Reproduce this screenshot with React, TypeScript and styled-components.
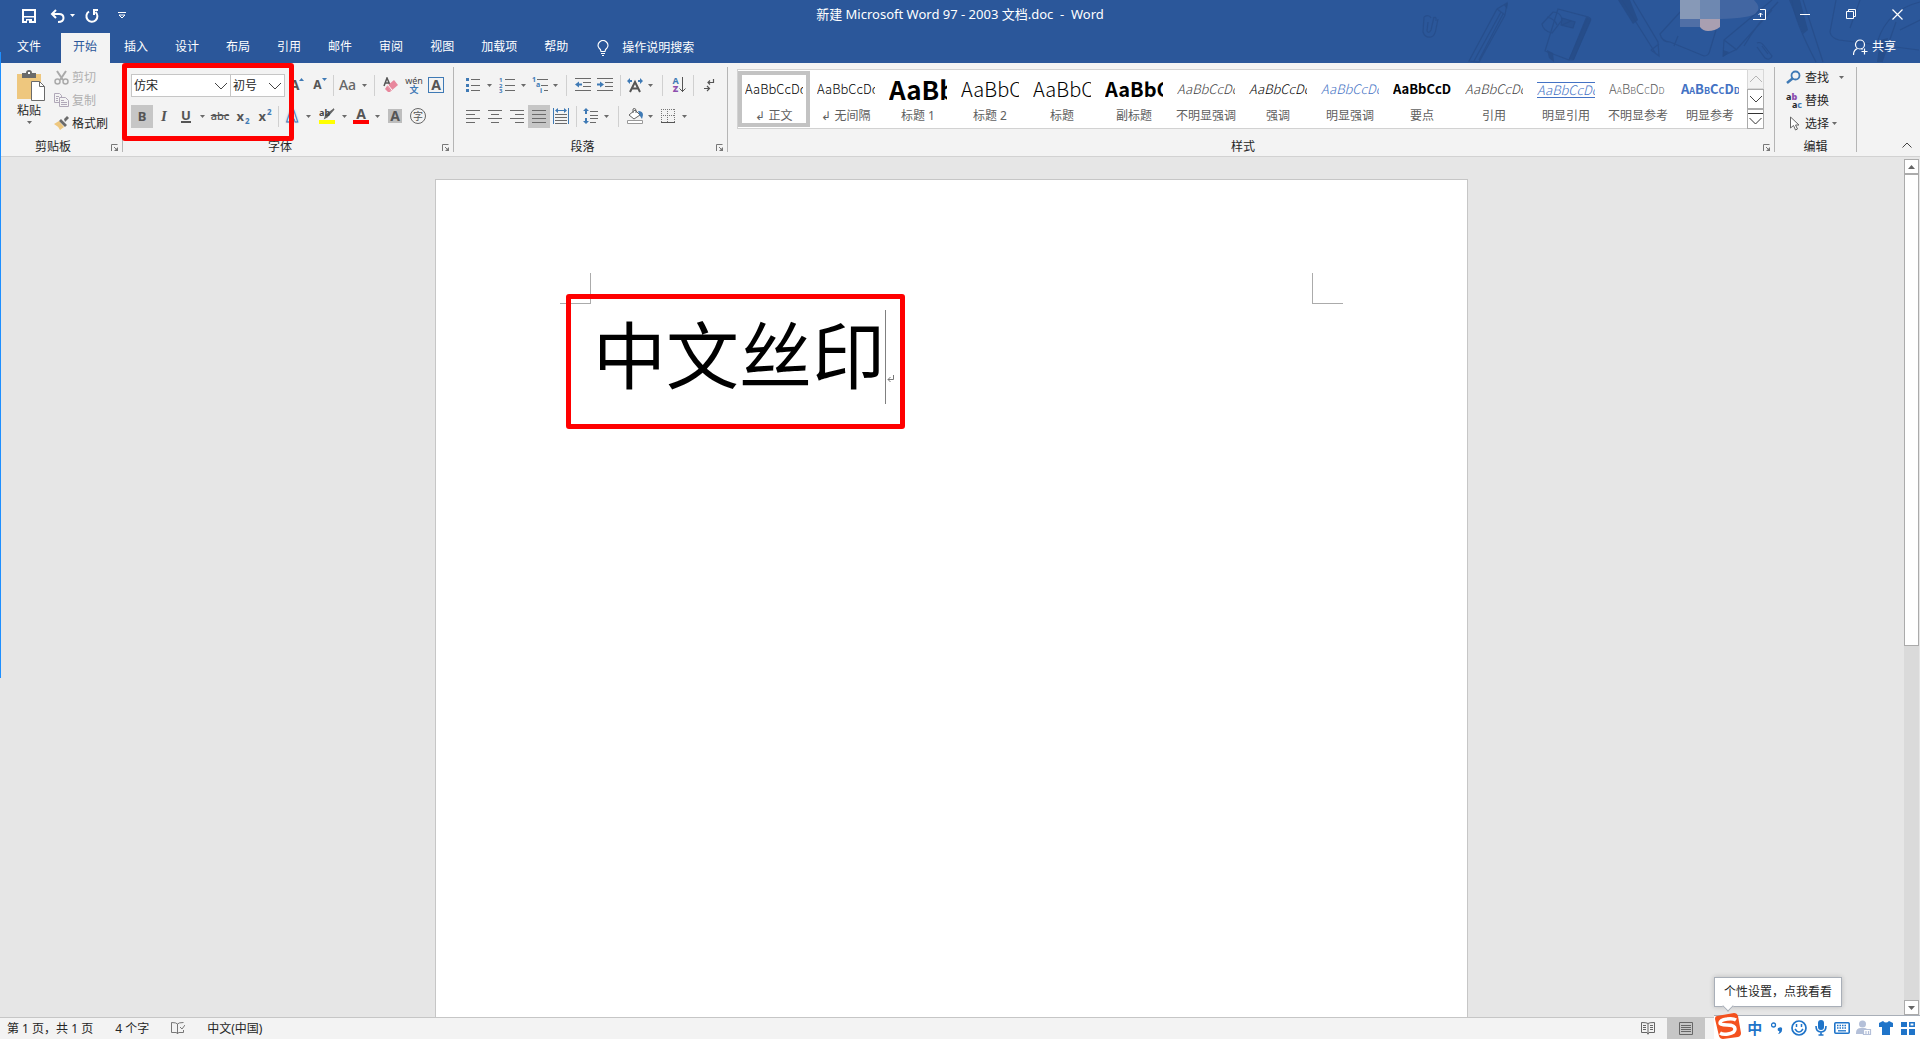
import React from "react";
import styled, { createGlobalStyle, css } from "styled-components";

const C = {
  blue: "#2b579a",
  ribbon: "#f3f3f3",
  body: "#e6e6e6",
  line: "#c6c6c6",
  sep: "#b5b5b5",
  icon: "#6a6a6a",
  accent: "#3f7ab5",
  text: "#262626",
  red: "#ff0000",
  tray: "#1f74c9",
};

const Global = createGlobalStyle`
  * { box-sizing: border-box; }
  body { margin: 0; background: ${C.body}; }
  button, select, a { font: inherit; color: inherit; }
`;

const App$ = styled.div`
  position: relative;
  display: flex;
  flex-direction: column;
  height: 100vh;
  overflow: hidden;
  color: ${C.text};
  font-family: "Noto Sans", "Noto Sans CJK SC", sans-serif;
  font-size: 12px;
  line-height: 16px;
`;

const Plain = styled.button`
  display: inline-flex;
  align-items: center;
  justify-content: center;
  padding: 0;
  border: 0;
  background: transparent;
  white-space: nowrap;
`;

/* ---------- header ---------- */
const Header = styled.header`
  position: relative;
  flex: none;
  background: ${C.blue};
  color: #fff;
`;
const Art = styled.svg`
  position: absolute;
  top: 0;
  right: 0;
  width: 520px;
  height: 63px;
  pointer-events: none;
`;
const TitleBar = styled.div`
  position: relative;
  display: grid;
  grid-template-columns: 1fr auto 1fr;
  height: 33px;
`;
const Quick = styled.div`
  display: flex;
  align-items: center;
  height: 31px;
  padding-left: 14px;
`;
const QuickBtn = styled(Plain)<{ $w: number }>`
  width: ${(p) => p.$w}px;
  height: 24px;
`;
const DocTitle = styled.h1`
  margin: 0;
  font-size: 13px;
  font-weight: 400;
  line-height: 28px;
  white-space: pre;
`;
const WinBtns = styled.div`
  display: flex;
  justify-content: flex-end;
`;
const WinBtn = styled(Plain)`
  width: 46px;
  height: 28px;
`;
const TabRow = styled.nav`
  position: relative;
  display: flex;
  height: 30px;
  padding-left: 3px;
`;
const Tab = styled(Plain)<{ $active?: boolean }>`
  margin: 0 1px;
  padding: 0 13px 2px 12px;
  ${(p) =>
    p.$active &&
    css`
      background: ${C.ribbon};
      color: ${C.blue};
    `}
`;
const FileTab = styled(Tab)`
  padding: 0 18px 2px 13px;
`;
const TellMe = styled(Plain)`
  gap: 13px;
  padding-bottom: 1px;
  margin-left: 15px;
`;
const Share = styled(Plain)`
  gap: 4px;
  margin-left: auto;
  padding: 0 24px 2px 0;
`;

/* ---------- ribbon ---------- */
const Ribbon = styled.div`
  display: flex;
  flex: none;
  height: 94px;
  padding: 4px 0;
  background: ${C.ribbon};
  border-bottom: 1px solid #d2d2d2;
`;
const Group = styled.section<{ $w?: number; $grow?: boolean }>`
  position: relative;
  display: flex;
  flex-direction: column;
  justify-content: space-between;
  ${(p) => (p.$grow ? "flex: 1; min-width: 0;" : `flex: none; width: ${p.$w}px;`)}
  height: 85px;
  border-right: 1px solid ${C.sep};
`;
const GroupFoot = styled.div`
  display: flex;
  align-items: flex-end;
`;
const GroupName = styled.div`
  flex: 1;
  text-align: center;
  line-height: 11px;
`;
const Launch = styled(Plain)`
  width: 16px;
  height: 8px;
  padding-left: 5px;
  justify-content: flex-start;
`;
const Rows = styled.div`
  display: flex;
  flex-direction: column;
  gap: 8px;
  padding: 7px 0 0 8px;
`;
const Row = styled.div`
  display: flex;
  height: 23px;
`;
const Tool = styled(Plain)<{ $w?: number; $on?: boolean }>`
  flex: none;
  width: ${(p) => p.$w ?? 22}px;
  height: 23px;
  padding-bottom: 1px;
  background: ${(p) => (p.$on ? "#c6c6c6" : "transparent")};
  color: #555;
`;
const Sep = styled.i<{ $w?: number }>`
  flex: none;
  width: ${(p) => p.$w ?? 5}px;
  margin: 1px 0;
  background: linear-gradient(#d0d0d0, #d0d0d0) center / 1px 100% no-repeat;
`;
const ComboWrap = styled.label<{ $w: number }>`
  position: relative;
  display: block;
  width: ${(p) => p.$w}px;
  height: 23px;
  & + & {
    margin-left: -1px;
  }
`;
const Combo = styled.select`
  appearance: none;
  width: 100%;
  height: 23px;
  padding: 0 2px;
  border: 1px solid ${C.line};
  border-radius: 0;
  background: #fff;
`;
const ComboArrow = styled.svg`
  position: absolute;
  right: 3px;
  top: 8px;
  pointer-events: none;
`;
const Glyph = styled.span<{ $size?: number; $color?: string }>`
  font-size: ${(p) => p.$size ?? 14}px;
  line-height: 16px;
  font-weight: 700;
  color: ${(p) => p.$color ?? "#555"};
`;
const CaseText = styled.span`
  font-size: 14px;
  font-weight: 500;
  color: #666;
`;
const Italic = styled(Glyph)`
  font-family: "Liberation Serif", serif;
  font-style: italic;
`;
const Under = styled(Glyph)`
  border-bottom: 2px solid #555;
  line-height: 12px;
`;
const Strike = styled(Glyph)`
  text-decoration: line-through;
  font-weight: 500;
`;
const Small = styled.small<{ $up?: boolean }>`
  align-self: ${(p) => (p.$up ? "flex-start" : "flex-end")};
  margin: 3px 0 2px 1px;
  font-size: 8px;
  line-height: 8px;
  font-weight: 700;
  color: ${C.accent};
`;
const GrowMark = styled.svg`
  align-self: flex-start;
  margin-top: 4px;
`;
const Outline = styled(Glyph)`
  color: #fff;
  -webkit-text-stroke: 1px ${C.accent};
  text-shadow: 0 0 3px #8db7e0;
`;
const Bar = styled.span<{ $c: string }>`
  display: flex;
  justify-content: center;
  width: 16px;
  height: 16px;
  border-bottom: 4px solid ${(p) => p.$c};
  & > span {
    line-height: 12px;
  }
`;
const Phonetic = styled.span`
  display: flex;
  flex-direction: column;
  align-items: center;
  font-size: 9px;
  line-height: 8px;
  color: #444;
  b {
    font-size: 9px;
    line-height: 9px;
    color: ${C.accent};
  }
`;
const Boxed = styled(Glyph)`
  width: 16px;
  border: 1px solid ${C.accent};
  line-height: 14px;
`;
const Shaded = styled(Glyph)`
  width: 14px;
  background: #bdbdbd;
  line-height: 14px;
`;
const Circled = styled.span`
  width: 16px;
  height: 16px;
  border: 1px solid #666;
  border-radius: 50%;
  font-size: 10px;
  line-height: 14px;
  text-align: center;
`;
const SortGlyph = styled.span`
  display: flex;
  flex-direction: column;
  font-size: 9px;
  line-height: 8px;
  font-weight: 700;
  color: ${C.accent};
  b {
    color: #8e4fae;
  }
`;
const RedBox = styled.div<{ $l: number; $t: number; $w: number; $h: number }>`
  position: absolute;
  left: ${(p) => p.$l}px;
  top: ${(p) => p.$t}px;
  width: ${(p) => p.$w}px;
  height: ${(p) => p.$h}px;
  border: 5px solid ${C.red};
  border-radius: 3px;
  pointer-events: none;
`;

const ClipRow = styled.div`
  display: flex;
`;
const Paste = styled(Plain)`
  flex-direction: column;
  justify-content: flex-start;
  width: 54px;
  height: 66px;
  padding: 3px 0 0 4px;
  gap: 2px;
  svg:first-child {
    margin-left: 4px;
  }
`;
const Stack = styled.div<{ $pad?: number }>`
  display: flex;
  flex-direction: column;
  padding-left: ${(p) => p.$pad ?? 0}px;
`;
const LineBtn = styled(Plain)<{ $off?: boolean }>`
  justify-content: flex-start;
  gap: 3px;
  height: 23px;
  padding-bottom: 2px;
  color: ${(p) => (p.$off ? "#b0b0b0" : C.text)};
`;
const FarArrow = styled.span`
  display: flex;
  padding-left: 7px;
`;
const Replace = styled.span`
  width: 16px;
  font-size: 9px;
  font-weight: 700;
  line-height: 8px;
  text-align: left;
  b {
    color: #8e4fae;
  }
  em {
    display: block;
    font-style: normal;
    text-align: right;
  }
  i {
    font-style: normal;
    color: ${C.accent};
  }
`;

const Gallery = styled.div`
  display: flex;
  height: 60px;
  margin: 2px 10px 0 9px;
  border: 1px solid #d2d2d2;
  background: #fff;
`;
const Items = styled.div`
  display: flex;
  flex: 1;
  min-width: 0;
  padding: 1px 0;
  overflow: hidden;
`;
const StyleItem = styled.button<{ $on?: boolean }>`
  flex: none;
  display: flex;
  flex-direction: column;
  gap: 5px;
  width: 72px;
  height: 56px;
  padding: 0 3px;
  border: 4px solid ${(p) => (p.$on ? "#c3c3c3" : "transparent")};
  background: transparent;
`;
const Sample = styled.span<{ $size?: number; $bold?: boolean; $it?: boolean; $c?: string; $caps?: boolean; $ruled?: boolean }>`
  width: 58px;
  height: 28px;
  overflow: hidden;
  white-space: nowrap;
  text-align: left;
  font-family: "Noto Sans CJK SC", sans-serif;
  font-size: ${(p) => p.$size ?? 13}px;
  line-height: 28px;
  font-weight: ${(p) => (p.$bold ? 700 : 300)};
  font-style: ${(p) => (p.$it ? "italic" : "normal")};
  font-variant: ${(p) => (p.$caps ? "small-caps" : "normal")};
  color: ${(p) => p.$c ?? "#000"};
  ${(p) =>
    p.$ruled &&
    css`
      height: 16px;
      margin: 7px 0 5px;
      line-height: 14px;
      border-top: 1px solid #4472c4;
      border-bottom: 1px solid #4472c4;
    `}
`;
const StyleName = styled.span`
  align-self: center;
  line-height: 15px;
  color: #606060;
  white-space: nowrap;
`;
const GalleryNav = styled.div`
  display: flex;
  flex-direction: column;
  width: 17px;
  margin: -1px -1px -1px 0;
`;
const NavBtn = styled(Plain)<{ $off?: boolean }>`
  height: 20px;
  border: 1px solid ${(p) => (p.$off ? "#d8d8d8" : "#ababab")};
  background: ${(p) => (p.$off ? C.ribbon : "#fff")};
`;
const CollapseArea = styled.div`
  display: flex;
  width: 63px;
`;
const Collapse = styled(Plain)`
  align-self: flex-end;
  margin-left: auto;
  width: 26px;
  height: 14px;
`;

/* ---------- workspace ---------- */
const Work = styled.div`
  display: flex;
  flex: 1;
  min-height: 0;
`;
const Canvas = styled.main`
  flex: 1;
  display: flex;
  justify-content: center;
  padding: 22px 1px 0 0;
  overflow: hidden;
`;
const Page = styled.article`
  position: relative;
  width: 1033px;
  height: 1460px;
  padding: 123px 154px;
  border: 1px solid ${C.line};
  background: #fff;
`;
const Crop = styled.i<{ $right?: boolean }>`
  position: absolute;
  top: 93px;
  width: 31px;
  height: 31px;
  border-bottom: 1px solid #ababab;
  ${(p) =>
    p.$right
      ? "right: 124px; border-left: 1px solid #ababab;"
      : "left: 124px; border-right: 1px solid #ababab;"}
`;
const Para = styled.p`
  display: flex;
  align-items: center;
  height: 108px;
  margin: 0;
  padding-left: 3px;
  color: #000;
  font-family: "Noto Sans CJK SC", sans-serif;
  font-size: 73px;
`;
const Run = styled.span`
  align-self: flex-start;
  line-height: 96px;
`;
const Caret = styled.i`
  width: 1px;
  height: 94px;
  margin-right: 1px;
  background: #808080;
`;
const ParaMark = styled.svg`
  margin-top: 44px;
`;
const Scroll = styled.div`
  display: flex;
  flex-direction: column;
  width: 16px;
  padding: 2px 1px 2px 0;
`;
const ScrollBtn = styled(Plain)`
  flex: none;
  height: 15px;
  border: 1px solid #ababab;
  background: #fff;
`;
const Thumb = styled.div`
  flex: 57;
  border: 1px solid #ababab;
  background: #fff;
`;
const Track = styled.div`
  flex: 43;
  background: #dadada;
`;

/* ---------- status ---------- */
const Status = styled.footer`
  display: flex;
  flex: none;
  align-items: center;
  height: 22px;
  padding-left: 7px;
  border-top: 1px solid ${C.line};
  background: ${C.ribbon};
`;
const StatItem = styled(Plain)`
  margin-right: 22px;
`;
const Views = styled.div`
  display: flex;
  align-self: stretch;
  margin: 0 215px 0 auto;
`;
const ViewBtn = styled(Plain)<{ $on?: boolean }>`
  width: 38px;
  background: ${(p) => (p.$on ? "#c6c6c6" : "transparent")};
`;
const Tray = styled.div`
  position: absolute;
  right: 0;
  bottom: 0;
  display: flex;
  align-items: center;
  justify-content: space-between;
  width: 206px;
  height: 24px;
  padding-right: 3px;
  border-top: 1px solid #a9afb8;
  background: #fff;
`;
const TrayBtn = styled(Plain)`
  width: 18px;
  height: 22px;
  color: ${C.tray};
  font-size: 15px;
  font-weight: 700;
`;
const LogoBtn = styled(Plain)`
  width: 28px;
  height: 28px;
  margin-top: -4px;
`;
const Tip = styled.div`
  position: absolute;
  right: 78px;
  bottom: 32px;
  width: 128px;
  height: 30px;
  border: 1px solid #a9afb8;
  background: #fff;
  box-shadow: 0 0 5px rgba(0, 0, 0, 0.2);
  line-height: 28px;
  text-align: center;
  &::after {
    content: "";
    position: absolute;
    left: 9px;
    bottom: -4px;
    width: 7px;
    height: 7px;
    border: solid #a9afb8;
    border-width: 0 1px 1px 0;
    background: #fff;
    transform: rotate(45deg);
  }
`;
const EdgeLine = styled.i`
  position: absolute;
  left: 0;
  top: 52px;
  width: 1px;
  height: 626px;
  background: #1e8fff;
`;

/* ---------- drawings ---------- */
const Svg = ({ w = 16, h = 16, children }: { w?: number; h?: number; children: React.ReactNode }) => (
  <svg width={w} height={h} viewBox={`0 0 ${w} ${h}`} fill="none" aria-hidden="true">
    {children}
  </svg>
);
const Down = ({ color = "#6a6a6a" }: { color?: string }) => (
  <Svg w={5} h={3}>
    <path d="M0 0h5L2.500 3z" fill={color} />
  </Svg>
);
const Drop = ({ label }: { label: string }) => (
  <Tool $w={11} aria-label={label}>
    <Down />
  </Tool>
);
const Chevron = ({ up, color = "#444" }: { up?: boolean; color?: string }) => (
  <Svg w={14} h={8}>
    <path d={up ? "M1 7l6-6 6 6" : "M1 1l6 6 6-6"} stroke={color} />
  </Svg>
);
const LaunchIcon = () => (
  <Svg w={8} h={8}>
    <path d="M.5 7V.5H6.500M3 3l3 3" stroke="#777" />
    <path d="M7 3v4H3z" fill="#777" />
  </Svg>
);
const Lines = ({ rows }: { rows: [number, number, number][] }) => (
  <path d={rows.map(([y, a, b]) => `M${a} ${y + 0.5}H${b}`).join("")} stroke={C.icon} />
);
const Foot = ({ name, launch = true }: { name: string; launch?: boolean }) => (
  <GroupFoot>
    <GroupName>{name}</GroupName>
    {launch && (
      <Launch aria-label={`${name}设置`}>
        <LaunchIcon />
      </Launch>
    )}
  </GroupFoot>
);

const HeaderArt = () => (
  <Art viewBox="0 0 520 63" fill="none" aria-hidden="true">
    <g stroke="#264c88" strokeWidth="1.2" opacity=".75">
      <path d="M24 17l-1 15q2 6 8 5 4-1 5-8l2-10M28 22l-1 9q2 3 4-1l3-13M24 17q5-3 7 1M33 18q4-2 3 3" />
      <path d="M69 61L97 9l10-6-2 12-26 47zM74 61l27-49M79 60l24-46M97 9l8 6M69 61l10 1" />
      <path d="M142 24l11-12q8 0 9 8l-10 13q-9-2-10-9zM147 17q8 2 10 8" />
      <path d="M158 9l30 8-19 43-24-9zM188 17q4 1 2 5l-17 38h-4M162 18l13 4-2 6-12-3zM162 25l9-4" />
      <path d="M222 0l34 54M233 0l25 42 1 14-8-6M251 50l8-6" />
      <path d="M282 10l-22 24q2 8 10 8l34 14q5 0 6-6l6-20M274 46l4-10" />
      <path d="M372 0l-48 40-1 16 14-7L372 10M324 40l13 10M378 2q-20 20-34 44" />
      <path d="M357 43q4-2 8 4l7 9q-2 5-7 2l-8-11M362 46l6 8" />
      <path d="M392 0q2 20 24 62M403 0l20 62M436 0l-6 32q1 6 9 8l80 10M460 0l-10 28" />
      <path d="M478 40q10-30 42-38M482 62l14-40M500 30l20-10" />
    </g>
    <g fill="#264c88" opacity=".85">
      <path d="M104 5l4-2-1 6zM186 17l5 2-17 41-5-1zM147 50l6 3 1 9-5-4z" />
      <path d="M218 0h12l8 20-5 4zM389 0h11l8 30-5 4zM323 50l6 2-6 5zM480 40l8-2-6 24h-5z" />
      <path d="M162 18l13 4-2 6-12-3z" opacity=".6" />
    </g>
    <path d="M320 0h34q8 8 2 13-4 5-36 6z" fill="#4266a2" />
    <path d="M280 0h20v19h-20z" fill="#8799b7" />
    <path d="M300 0h20v19h-20z" fill="#6e88b1" />
    <path d="M280 19h20v8h-20z" fill="#506fa6" />
    <path d="M300 19h20v8q-5 4-12 4-5 0-8-4z" fill="#a99fb1" />
  </Art>
);

const tabs = ["开始", "插入", "设计", "布局", "引用", "邮件", "审阅", "视图", "加载项", "帮助"];

const styles: { n: string; p?: object }[] = [
  { n: "正文" },
  { n: "无间隔" },
  { n: "标题 1", p: { $size: 26, $bold: true } },
  { n: "标题 2", p: { $size: 20 } },
  { n: "标题", p: { $size: 20 } },
  { n: "副标题", p: { $size: 20, $bold: true } },
  { n: "不明显强调", p: { $it: true, $c: "#404040" } },
  { n: "强调", p: { $it: true } },
  { n: "明显强调", p: { $it: true, $c: "#4472c4" } },
  { n: "要点", p: { $bold: true } },
  { n: "引用", p: { $it: true, $c: "#404040" } },
  { n: "明显引用", p: { $it: true, $c: "#4472c4", $ruled: true } },
  { n: "不明显参考", p: { $caps: true, $c: "#5a5a5a" } },
  { n: "明显参考", p: { $caps: true, $c: "#4472c4", $bold: true } },
];

const ClipboardGroup = () => (
  <Group $w={123}>
    <ClipRow>
      <Paste>
        <Svg w={28} h={31}>
          <path d="M0 4h24v25H0z" fill="#eec77e" />
          <path d="M5 3h4q0-3 3-3t3 3h4v5H5z" fill="#6a6a6a" />
          <path d="M11 2h2v2h-2z" fill="#fff" />
          <path d="M14.500 11.500h8l5 5v14h-13z" fill="#fff" stroke="#6a6a6a" />
          <path d="M22.500 11.500v5h5" stroke="#6a6a6a" />
        </Svg>
        <span>粘贴</span>
        <Down />
      </Paste>
      <Stack>
        <LineBtn $off>
          <Svg w={15} h={15}>
            <path d="M3 1l6 9M12 1L6 10" stroke="#aaa" strokeWidth="2" />
            <circle cx="3.500" cy="11.500" r="2.500" stroke="#aaa" strokeWidth="1.500" />
            <circle cx="11.500" cy="11.500" r="2.500" stroke="#aaa" strokeWidth="1.500" />
          </Svg>
          剪切
        </LineBtn>
        <LineBtn $off>
          <Svg w={15} h={15}>
            <path d="M5 9.500H.5v-9h5l2 2v2M2 3.500h3M2 5.500h2M2 7.500h2" stroke="#b0a8b8" />
            <path d="M5.500 4.500h6l3 3v6h-9zM7 7.500h3M7 9.500h6M7 11.500h6" stroke="#b0a8b8" />
          </Svg>
          复制
        </LineBtn>
        <LineBtn>
          <Svg w={15} h={15}>
            <path d="M0 8l5-3 5 6-4 3q-2-4-6-6z" fill="#eec77e" />
            <path d="M5 5l2-2 6 6-2 2zM10 3l3-3 2 2-4 4z" fill="#6a6a6a" />
          </Svg>
          格式刷
        </LineBtn>
      </Stack>
    </ClipRow>
    <Foot name="剪贴板" />
  </Group>
);

const FontGroup = () => (
  <Group $w={331}>
    <Rows>
      <Row>
        <ComboWrap $w={100}>
          <Combo aria-label="字体" defaultValue="仿宋">
            <option>仿宋</option>
          </Combo>
          <ComboArrow width="14" height="8" viewBox="0 0 14 8" fill="none">
            <path d="M1 1l6 6 6-6" stroke="#444" />
          </ComboArrow>
        </ComboWrap>
        <ComboWrap $w={55}>
          <Combo aria-label="字号" defaultValue="初号">
            <option>初号</option>
          </Combo>
          <ComboArrow width="14" height="8" viewBox="0 0 14 8" fill="none">
            <path d="M1 1l6 6 6-6" stroke="#444" />
          </ComboArrow>
        </ComboWrap>
        <Tool $w={24} aria-label="增大字号">
          <Glyph $size={14}>A</Glyph>
          <GrowMark width="5" height="3">
            <path d="M0 3h5L2.500 0z" fill={C.accent} />
          </GrowMark>
        </Tool>
        <Tool aria-label="减小字号">
          <Glyph $size={12}>A</Glyph>
          <GrowMark width="5" height="3">
            <path d="M0 0h5L2.500 3z" fill={C.accent} />
          </GrowMark>
        </Tool>
        <Sep />
        <Tool $w={23} aria-label="更改大小写">
          <CaseText>Aa</CaseText>
        </Tool>
        <Drop label="大小写选项" />
        <Sep $w={9} />
        <Tool $w={24} aria-label="清除格式">
          <Svg>
            <path d="M1 9L4 1l3 7M2 6h4" stroke="#555" strokeWidth="1.500" />
            <path d="M11 3l4 5-7 6-4-5z" fill="#e8879c" />
            <path d="M4 9l4 5-1 1H5l-3-3z" fill="#e8879c" />
            <path d="M5 8l4 5" stroke="#fff" />
          </Svg>
        </Tool>
        <Tool aria-label="拼音指南">
          <Phonetic>
            wén<b>文</b>
          </Phonetic>
        </Tool>
        <Tool aria-label="字符边框">
          <Boxed>A</Boxed>
        </Tool>
      </Row>
      <Row>
        <Tool $on aria-label="加粗">
          <Glyph $size={13}>B</Glyph>
        </Tool>
        <Tool aria-label="倾斜">
          <Italic $size={15}>I</Italic>
        </Tool>
        <Tool aria-label="下划线">
          <Under $size={13}>U</Under>
        </Tool>
        <Drop label="下划线选项" />
        <Tool $w={24} aria-label="删除线">
          <Strike $size={11}>abc</Strike>
        </Tool>
        <Tool aria-label="下标">
          <Glyph $size={13}>x</Glyph>
          <Small>2</Small>
        </Tool>
        <Tool aria-label="上标">
          <Glyph $size={13}>x</Glyph>
          <Small $up>2</Small>
        </Tool>
        <Sep />
        <Tool aria-label="文本效果">
          <Outline $size={16}>A</Outline>
        </Tool>
        <Drop label="文本效果选项" />
        <Tool $w={25} aria-label="突出显示">
          <Svg>
            <path d="M15 1L8 9l-2 1 1-3z" fill="#666" stroke="#666" strokeWidth="1.500" />
            <path d="M0 12h16v4H0z" fill="#ff0" />
            <text x="0" y="8" fontSize="9" fontWeight="700" fill="#444">
              ab
            </text>
          </Svg>
        </Tool>
        <Drop label="突出显示颜色" />
        <Tool aria-label="字体颜色">
          <Bar $c={C.red}>
            <Glyph $size={14}>A</Glyph>
          </Bar>
        </Tool>
        <Drop label="字体颜色选项" />
        <Tool $w={24} aria-label="字符底纹">
          <Shaded>A</Shaded>
        </Tool>
        <Tool aria-label="带圈字符">
          <Circled>字</Circled>
        </Tool>
      </Row>
    </Rows>
    <Foot name="字体" />
    <RedBox $l={-1} $t={-4} $w={172} $h={78} />
  </Group>
);

const ParagraphGroup = () => (
  <Group $w={274}>
    <Rows>
      <Row>
        <Tool aria-label="项目符号">
          <Svg>
            <path d="M1 1h3v3H1zM1 7h3v3H1zM1 12h3v3H1z" fill={C.accent} />
            <Lines rows={[[2, 6, 15], [8, 6, 15], [13, 6, 15]]} />
          </Svg>
        </Tool>
        <Drop label="项目符号库" />
        <Tool $w={23} aria-label="编号">
          <Svg>
            <Lines rows={[[2, 6, 16], [8, 6, 16], [13, 6, 16]]} />
            <g fontSize="6" fontWeight="700" fill={C.accent}>
              <text x="0" y="5">1</text>
              <text x="0" y="11">2</text>
              <text x="0" y="16">3</text>
            </g>
          </Svg>
        </Tool>
        <Drop label="编号库" />
        <Tool $w={21} aria-label="多级列表">
          <Svg>
            <Lines rows={[[2, 5, 16], [8, 9, 16], [13, 12, 16]]} />
            <g fontSize="7" fontWeight="700" fill={C.accent}>
              <text x="0" y="5">1</text>
              <text x="4" y="10">a</text>
              <text x="8" y="16">i</text>
            </g>
          </Svg>
        </Tool>
        <Drop label="列表库" />
        <Sep $w={11} />
        <Tool aria-label="减少缩进量">
          <Svg>
            <Lines rows={[[1, 0, 16], [5, 8, 16], [9, 8, 16], [13, 0, 16]]} />
            <path d="M0 7.500l4-3v2h3v2H4v2z" fill={C.accent} />
          </Svg>
        </Tool>
        <Tool aria-label="增加缩进量">
          <Svg>
            <Lines rows={[[1, 0, 16], [5, 8, 16], [9, 8, 16], [13, 0, 16]]} />
            <path d="M7 7.500l-4-3v2H0v2h3v2z" fill={C.accent} />
          </Svg>
        </Tool>
        <Sep $w={9} />
        <Tool $w={20} aria-label="中文版式">
          <Svg>
            <path d="M3 15L8 5l5 10M5 11.500h6" stroke="#555" strokeWidth="2" />
            <path d="M0 4l3-3v2h2v2H3v2zM16 4l-3-3v2h-2v2h2v2z" fill={C.accent} />
          </Svg>
        </Tool>
        <Drop label="中文版式选项" />
        <Sep $w={12} />
        <Tool aria-label="排序">
          <SortGlyph>
            A<b>Z</b>
          </SortGlyph>
          <Svg w={7} h={16}>
            <path d="M3.500 0v15M.5 11.500l3 3 3-3" stroke="#555" />
          </Svg>
        </Tool>
        <Sep $w={7} />
        <Tool $w={24} aria-label="显示编辑标记">
          <Svg w={12} h={14}>
            <path d="M10.500 1v3.500H5M7 2.500L5 4.500l2 2M1 10.500h5.500M4 8l2.500 2.500L4 13" stroke="#555" strokeWidth="1.200" />
          </Svg>
        </Tool>
      </Row>
      <Row>
        <Tool aria-label="左对齐">
          <Svg>
            <Lines rows={[[2, 1, 15], [6, 1, 10], [10, 1, 15], [14, 1, 10]]} />
          </Svg>
        </Tool>
        <Tool aria-label="居中">
          <Svg>
            <Lines rows={[[2, 1, 15], [6, 4, 12], [10, 1, 15], [14, 4, 12]]} />
          </Svg>
        </Tool>
        <Tool aria-label="右对齐">
          <Svg>
            <Lines rows={[[2, 1, 15], [6, 6, 15], [10, 1, 15], [14, 6, 15]]} />
          </Svg>
        </Tool>
        <Tool $on aria-label="两端对齐">
          <Svg>
            <Lines rows={[[2, 1, 15], [6, 1, 15], [10, 1, 15], [14, 1, 15]]} />
          </Svg>
        </Tool>
        <Tool aria-label="分散对齐">
          <Svg>
            <Lines rows={[[6, 2, 14], [9, 2, 14], [12, 2, 14], [15, 2, 14]]} />
            <path d="M.5 0v16M15.500 0v16M3 2.500h10" stroke={C.accent} />
            <path d="M2 2.500L5 0v5zM14 2.500L11 0v5z" fill={C.accent} />
          </Svg>
        </Tool>
        <Sep $w={9} />
        <Tool $w={20} aria-label="行距">
          <Svg>
            <Lines rows={[[3, 7, 15], [7, 7, 15], [10, 7, 15], [14, 7, 13]]} />
            <path d="M3 0l3 3H4v3H2V3H0zM3 16l3-3H4v-3H2v3H0z" fill={C.accent} />
          </Svg>
        </Tool>
        <Drop label="行距选项" />
        <Sep $w={12} />
        <Tool $w={21} aria-label="底纹">
          <Svg>
            <path d="M2 7l6-5 5 5-6 4z" fill="#fff" stroke="#666" />
            <path d="M6 5V1q2-2 3 1v3" stroke="#666" />
            <path d="M11 3q5 0 5 4l-1 4-2-3z" fill={C.accent} />
            <path d="M.5 12.500h15v3H.5z" fill="#fff" stroke="#999" />
          </Svg>
        </Tool>
        <Drop label="底纹颜色" />
        <Tool $w={23} aria-label="边框">
          <Svg w={14} h={14}>
            <path d="M.5 0v13M13.500 0v13M6.500 0v13M0 .5h14M0 6.500h14" stroke="#777" strokeDasharray="1 1" />
            <path d="M0 13.500h14" stroke="#555" />
          </Svg>
        </Tool>
        <Drop label="边框选项" />
      </Row>
    </Rows>
    <Foot name="段落" />
  </Group>
);

const StylesGroup = () => (
  <Group $grow>
    <Gallery>
      <Items>
        {styles.map((st, i) => (
          <StyleItem key={st.n} $on={i === 0}>
            <Sample {...st.p}>AaBbCcDd</Sample>
            <StyleName>{i < 2 ? "↲ " + st.n : st.n}</StyleName>
          </StyleItem>
        ))}
      </Items>
      <GalleryNav>
        <NavBtn $off aria-label="上一行">
          <Chevron up color="#b5b5b5" />
        </NavBtn>
        <NavBtn aria-label="下一行">
          <Chevron />
        </NavBtn>
        <NavBtn aria-label="其他">
          <Svg w={15} h={14}>
            <path d="M0 1.500h15M1.500 6l6 6 6-6" stroke="#333" />
          </Svg>
        </NavBtn>
      </GalleryNav>
    </Gallery>
    <Foot name="样式" />
  </Group>
);

const EditGroup = () => (
  <Group $w={82}>
    <Stack $pad={11}>
      <LineBtn>
        <Svg>
          <circle cx="9.500" cy="5.500" r="4" stroke={C.accent} strokeWidth="1.800" />
          <path d="M6.500 8.500L1 13" stroke={C.accent} strokeWidth="2.500" />
        </Svg>
        查找
        <FarArrow>
          <Down />
        </FarArrow>
      </LineBtn>
      <LineBtn>
        <Replace>
          a<b>b</b>
          <em>
            a<i>c</i>
          </em>
        </Replace>
        替换
      </LineBtn>
      <LineBtn>
        <Svg>
          <path d="M4.500 1v11l3-2.500 2 4.500 2-1-2-4h3.500z" fill="#fff" stroke="#666" />
        </Svg>
        选择
        <Down />
      </LineBtn>
    </Stack>
    <Foot name="编辑" launch={false} />
  </Group>
);

export default function App() {
  return (
    <App$>
      <Global />
      <Header>
        <HeaderArt />
        <TitleBar>
          <Quick>
            <QuickBtn $w={30} aria-label="保存">
              <Svg w={14} h={14}>
                <path d="M1 1h12v12H1z" stroke="#fff" strokeWidth="2" />
                <path d="M1 7h12v1.500H1zM4 10h6v4H4z" fill="#fff" />
                <path d="M5 11.500h2V14H5z" fill={C.blue} />
              </Svg>
            </QuickBtn>
            <QuickBtn $w={26} aria-label="撤消">
              <Svg w={15} h={14}>
                <path d="M6 1L2 5l4 4M2 5h7q4.500 0 4.500 4t-5.500 4" stroke="#fff" strokeWidth="2" />
              </Svg>
            </QuickBtn>
            <Down color="#fff" />
            <QuickBtn $w={34} aria-label="恢复">
              <Svg w={14} h={14}>
                <path d="M4 2.500A5.500 5.500 0 1 0 10.500 3" stroke="#fff" strokeWidth="2" />
                <path d="M8 1h5M9 1v5" stroke="#fff" strokeWidth="2" />
              </Svg>
            </QuickBtn>
            <QuickBtn $w={26} aria-label="自定义快速访问工具栏">
              <Svg w={8} h={7}>
                <path d="M0 .5h8M1 3l3 3 3-3z" stroke="#fff" />
              </Svg>
            </QuickBtn>
          </Quick>
          <DocTitle>{"新建 Microsoft Word 97 - 2003 文档.doc  -  Word"}</DocTitle>
          <WinBtns>
            <WinBtn aria-label="功能区显示选项">
              <Svg w={13} h={11}>
                <path d="M0 10.500h12.500v-10H7M7.500 8V4M5.500 6l2-2 2 2" stroke="#fff" />
              </Svg>
            </WinBtn>
            <WinBtn aria-label="最小化">
              <Svg w={10} h={1}>
                <path d="M0 .5h10" stroke="#fff" />
              </Svg>
            </WinBtn>
            <WinBtn aria-label="还原">
              <Svg w={10} h={10}>
                <path d="M.5 2.500h7v7h-7zM2.500 2.500v-2h7v7h-2" stroke="#fff" />
              </Svg>
            </WinBtn>
            <WinBtn aria-label="关闭">
              <Svg w={11} h={11}>
                <path d="M.5.5l10 10M10.500.5l-10 10" stroke="#fff" strokeWidth="1.200" />
              </Svg>
            </WinBtn>
          </WinBtns>
        </TitleBar>
        <TabRow>
          <FileTab>文件</FileTab>
          {tabs.map((t, i) => (
            <Tab key={t} $active={i === 0}>
              {t}
            </Tab>
          ))}
          <TellMe>
            <Svg w={12} h={16}>
              <path d="M4 11.500q0-2-2-3.500A4.800 4.800 0 1 1 10 8q-2 1.500-2 3.500zM4 13.500h4M5 15.500h2" stroke="#fff" strokeWidth="1.100" />
            </Svg>
            操作说明搜索
          </TellMe>
          <Share>
            <Svg w={15} h={16}>
              <circle cx="7" cy="5.500" r="4.500" stroke="#fff" strokeWidth="1.200" />
              <path d="M.5 16q0-5 4-6.500M8 10h2M11.500 9.500v6M8.500 12.500h6" stroke="#fff" strokeWidth="1.200" />
            </Svg>
            共享
          </Share>
        </TabRow>
      </Header>

      <Ribbon>
        <ClipboardGroup />
        <FontGroup />
        <ParagraphGroup />
        <StylesGroup />
        <EditGroup />
        <CollapseArea>
          <Collapse aria-label="折叠功能区">
            <Svg w={10} h={6}>
              <path d="M.5 5.500L5 1l4.500 4.500" stroke="#444" />
            </Svg>
          </Collapse>
        </CollapseArea>
      </Ribbon>

      <Work>
        <Canvas>
          <Page>
            <Crop />
            <Crop $right />
            <Para>
              <Run>中文丝印</Run>
              <Caret />
              <ParaMark width="8" height="8" viewBox="0 0 8 8" fill="none">
                <path d="M6.500 0v4.500H1M3.500 2L1 4.500 3.500 7" stroke="#777" />
              </ParaMark>
            </Para>
            <RedBox $l={130} $t={114} $w={339} $h={135} />
          </Page>
        </Canvas>
        <Scroll>
          <ScrollBtn aria-label="向上滚动">
            <Svg w={7} h={4}>
              <path d="M0 4h7L3.500 0z" fill="#666" />
            </Svg>
          </ScrollBtn>
          <Thumb />
          <Track />
          <ScrollBtn aria-label="向下滚动">
            <Svg w={7} h={4}>
              <path d="M0 0h7L3.500 4z" fill="#666" />
            </Svg>
          </ScrollBtn>
        </Scroll>
      </Work>

      <Status>
        <StatItem>第 1 页，共 1 页</StatItem>
        <StatItem>4 个字</StatItem>
        <StatItem aria-label="校对">
          <Svg w={14} h={13}>
            <path d="M6.500 12V2q-1-1.500-6-1.500v10h5l1 1.500 1-1.500h5V8M6.500 2q1-1.500 6-1.500M9 5l2 2 3-4" stroke="#777" />
          </Svg>
        </StatItem>
        <StatItem>中文(中国)</StatItem>
        <Views>
          <ViewBtn aria-label="阅读视图">
            <Svg w={14} h={13}>
              <path d="M7 12.500V1.500M7 1.500Q6 .5 .5.5v10H6l1 1.500 1-1.500h5.500V.5Q8 .5 7 1.500M2 3.500h3M2 5.500h3M2 7.500h3M9 3.500h3M9 5.500h3M9 7.500h3" stroke="#666" />
            </Svg>
          </ViewBtn>
          <ViewBtn $on aria-label="页面视图">
            <Svg w={14} h={13}>
              <path d="M.5.5h13v12H.5zM2 3.500h10M2 5.500h10M2 7.500h10M2 9.500h10" stroke="#666" />
            </Svg>
          </ViewBtn>
        </Views>
      </Status>

      <EdgeLine />
      <Tip role="tooltip">个性设置，点我看看</Tip>
      <Tray>
        <LogoBtn aria-label="搜狗输入法">
          <Svg w={28} h={28}>
            <path d="M3 4L20 1q3 0 4 3l3 17q0 3-3 4L9 27q-3 0-4-3L1 7q0-3 2-3z" fill="#f4511e" />
            <path d="M22 8q-3-2-9-1-7 1-7 4 0 2 7 2 8 0 8 4 0 4-7 5-5 1-8-1" stroke="#fff" strokeWidth="3.500" />
          </Svg>
        </LogoBtn>
        <TrayBtn>中</TrayBtn>
        <TrayBtn aria-label="中文标点">
          <Svg w={12} h={12}>
            <circle cx="2.500" cy="3" r="2" stroke={C.tray} strokeWidth="1.300" />
            <path d="M7 6q5-2 4 2 0 3-4 4 2-2 1-3-2 0-1-3z" fill={C.tray} />
          </Svg>
        </TrayBtn>
        <TrayBtn aria-label="表情">
          <Svg>
            <circle cx="8" cy="8" r="7" stroke={C.tray} strokeWidth="1.700" />
            <path d="M5.500 4v3M10.500 4v3M4 9q4 6 8 0" stroke={C.tray} strokeWidth="1.500" />
          </Svg>
        </TrayBtn>
        <TrayBtn aria-label="语音">
          <Svg w={12} h={16}>
            <rect x="3" y="0" width="6" height="10" rx="3" fill={C.tray} />
            <path d="M1 6q0 6 5 6t5-6M6 12v3M3.500 15h5" stroke={C.tray} strokeWidth="1.600" />
          </Svg>
        </TrayBtn>
        <TrayBtn aria-label="输入方式">
          <Svg w={16} h={12}>
            <rect x=".8" y=".8" width="14.400" height="10.400" rx="1" stroke={C.tray} strokeWidth="1.600" />
            <path d="M3 3.500h10M3 6h10" stroke={C.tray} strokeWidth="1.400" strokeDasharray="1.500 1" />
            <path d="M4 8.800h8" stroke={C.tray} strokeWidth="1.300" />
          </Svg>
        </TrayBtn>
        <TrayBtn aria-label="登录">
          <Svg>
            <circle cx="6.500" cy="4" r="3.500" fill="#b4c0d9" />
            <path d="M0 13q0-5 5-5h3q2 0 3 1H7v5H0z" fill="#b4c0d9" />
            <path d="M7.500 9.500h7v5h-7zM10 11v3M12.500 11v3" stroke="#b4c0d9" strokeWidth="1.200" />
          </Svg>
        </TrayBtn>
        <TrayBtn aria-label="皮肤">
          <Svg w={14} h={14}>
            <path d="M4 0q3 3 6 0l4 2v4h-3v8H3V6H0V2z" fill={C.tray} />
          </Svg>
        </TrayBtn>
        <TrayBtn aria-label="工具箱">
          <Svg w={14} h={14}>
            <path d="M0 1h6v5H0zM0 8h6v6H0zM8 8h6v6H8z" fill={C.tray} />
            <path d="M8.800 1.800h4.400v3.500H8.800z" stroke={C.tray} strokeWidth="1.500" />
          </Svg>
        </TrayBtn>
      </Tray>
    </App$>
  );
}
